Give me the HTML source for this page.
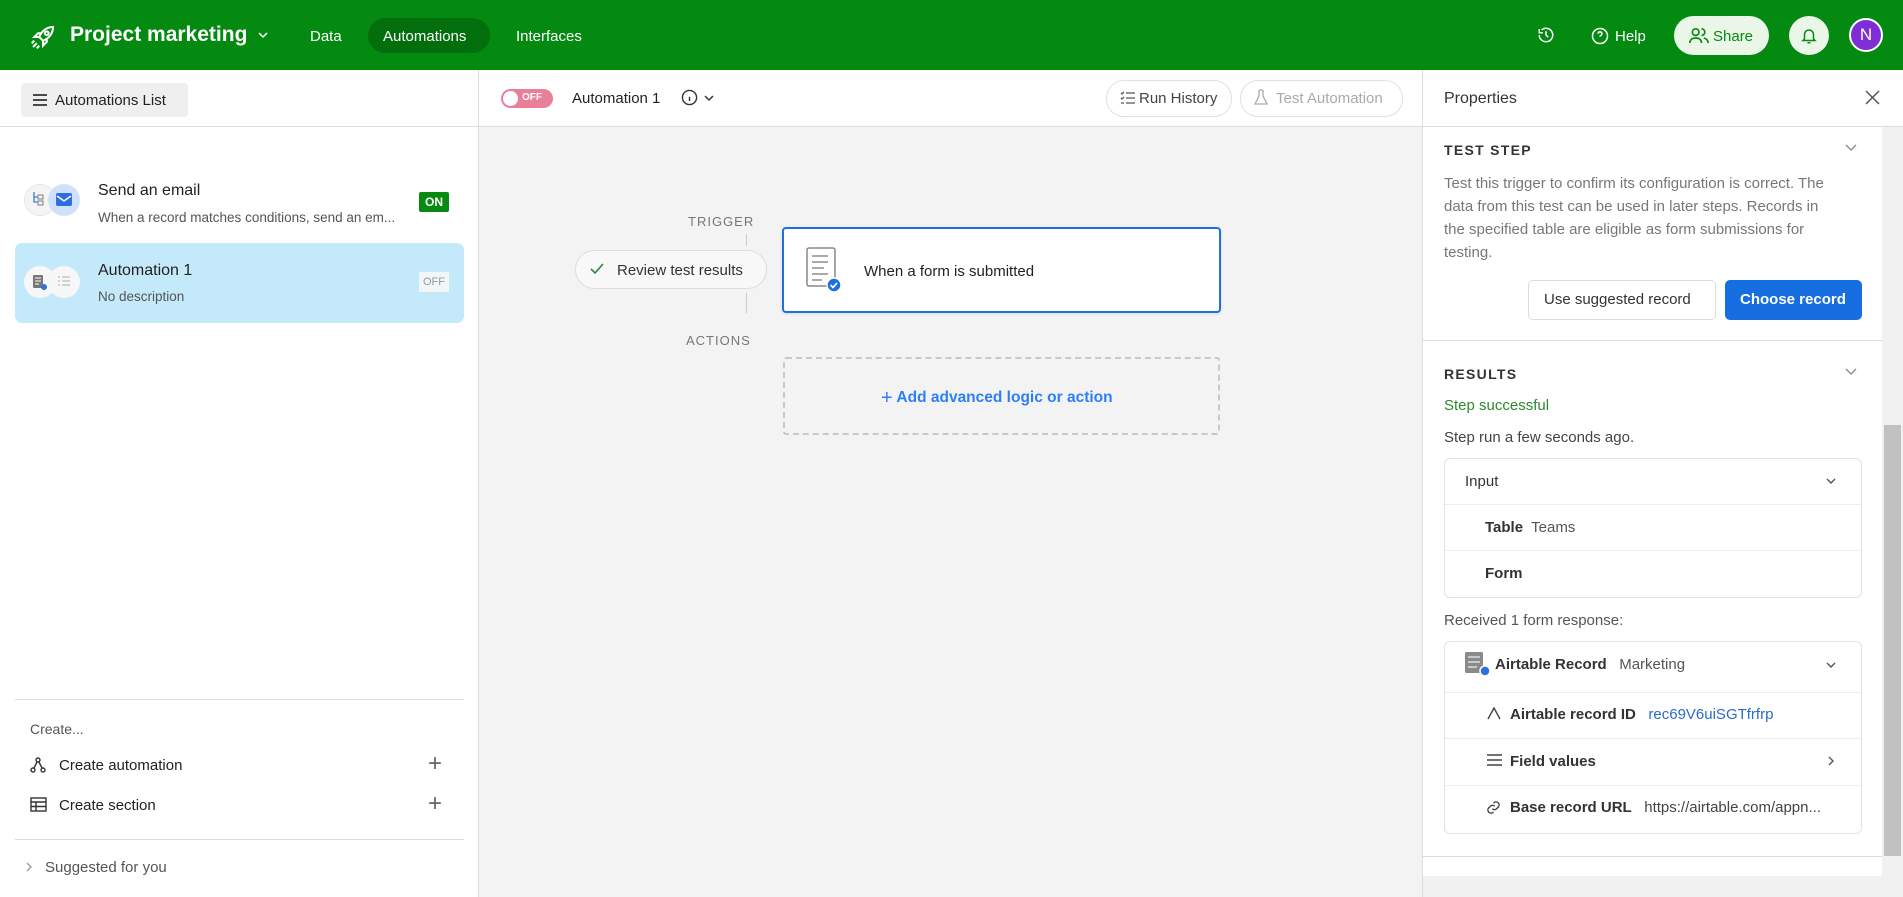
<!DOCTYPE html>
<html><head><meta charset="utf-8">
<style>
*{box-sizing:border-box;margin:0;padding:0}
body{width:1903px;height:897px;overflow:hidden;font-family:"Liberation Sans",sans-serif;color:#333;background:#fff;position:relative;font-size:15px}
.a{position:absolute;white-space:nowrap}
.hdr{position:absolute;left:0;top:0;width:1903px;height:70px;background:#048a10}
.w{color:#fff}
.b{font-weight:bold}
.sm{font-size:14px;color:#555}
.lbl{font-size:13px;letter-spacing:1px;color:#777}
.box{position:absolute;border:1px solid #e2e2e2;border-radius:6px;background:#fff}
.hl{position:absolute;height:1px;background:#ececec}
</style></head><body>
<div class="hdr"></div>
<svg class="a" style="left:28px;top:22px" width="30" height="30" viewBox="0 0 24 24" fill="none" stroke="#fff" stroke-width="1.6"><path d="M20 4c-5 0-9 3-11 8l3 3c5-2 8-6 8-11z"/><circle cx="15" cy="9" r="1.5"/><path d="M9 12H5l3-3h3M12 15v4l3-3v-3M7 17l-3 3M5 15l-2 2M9 19l-2 2"/></svg>
<div class="a w b" style="left:70px;top:23px;font-size:21px">Project marketing</div>
<svg class="a" style="left:257px;top:30px" width="12" height="10" viewBox="0 0 12 10" fill="none" stroke="#fff" stroke-width="1.5"><path d="M2 3l4 4 4-4"/></svg>
<div class="a w" style="left:310px;top:28px">Data</div>
<div class="a" style="left:368px;top:18px;width:122px;height:35px;border-radius:18px;background:#036f0c"></div>
<div class="a w" style="left:383px;top:28px">Automations</div>
<div class="a w" style="left:516px;top:28px">Interfaces</div>
<svg class="a" style="left:1537px;top:26px" width="18" height="18" viewBox="0 0 24 24" fill="none" stroke="#fff" stroke-width="2"><path d="M3 12a9 9 0 1 0 3-6.7M3 4v5h5M12 7v5l3 3"/></svg>
<svg class="a" style="left:1591px;top:27px" width="18" height="18" viewBox="0 0 24 24" fill="none" stroke="#fff" stroke-width="2"><circle cx="12" cy="12" r="10"/><path d="M9.5 9a2.5 2.5 0 1 1 3.5 2.3c-.6.3-1 .9-1 1.7M12 17h.01"/></svg>
<div class="a w" style="left:1615px;top:28px">Help</div>
<div class="a" style="left:1674px;top:16px;width:95px;height:39px;border-radius:20px;background:#eaf6e8"></div>
<svg class="a" style="left:1689px;top:27px" width="20" height="17" viewBox="0 0 24 20" fill="none" stroke="#048a10" stroke-width="2"><circle cx="8" cy="6" r="4"/><path d="M1 19c0-4 3-6 7-6s7 2 7 6M15 2a4 4 0 0 1 0 8M18 13c3 1 5 3 5 6"/></svg>
<div class="a" style="left:1713px;top:28px;color:#048a10">Share</div>
<div class="a" style="left:1789px;top:16px;width:40px;height:39px;border-radius:50%;background:#eaf6e8"></div>
<svg class="a" style="left:1800px;top:26px" width="18" height="20" viewBox="0 0 24 24" fill="none" stroke="#048a10" stroke-width="2"><path d="M6 16V10a6 6 0 0 1 12 0v6l2 2H4zM10 21h4"/></svg>
<div class="a" style="left:1849px;top:18px;width:34px;height:34px;border-radius:50%;background:#7d2ed6;border:2px solid #fff;color:#fff;font-size:17px;text-align:center;line-height:30px">N</div>

<!-- left panel -->
<div class="a" style="left:478px;top:70px;width:1px;height:827px;background:#ddd"></div>
<div class="hl" style="left:0;top:126px;width:478px;background:#ddd"></div>
<div class="a" style="left:21px;top:83px;width:167px;height:34px;background:#efefef;border-radius:4px"></div>
<svg class="a" style="left:32px;top:93px" width="16" height="14" viewBox="0 0 16 14" stroke="#333" stroke-width="1.8"><path d="M1 2h14M1 7h14M1 12h14"/></svg>
<div class="a" style="left:55px;top:92px;font-size:15px;color:#222">Automations List</div>

<div class="a" style="left:24px;top:184px;width:32px;height:32px;border-radius:50%;background:#f4f4f4;border:1px solid #e6e6e6"></div>
<div class="a" style="left:48px;top:184px;width:32px;height:32px;border-radius:50%;background:#cfe0fb"></div>
<svg class="a" style="left:56px;top:193px" width="16" height="13" viewBox="0 0 16 13"><rect width="16" height="13" rx="2" fill="#2d6ee0"/><path d="M1 3l7 5 7-5" stroke="#fff" stroke-width="1.5" fill="none"/></svg>
<svg class="a" style="left:32px;top:192px" width="12" height="16" viewBox="0 0 12 16" fill="none" stroke="#3a7be0" stroke-width="1.3"><path d="M2 0v10h4M2 5h4"/><rect x="6" y="3" width="5" height="4" stroke="#999"/><rect x="6" y="9" width="5" height="4" stroke="#999"/></svg>
<div class="a" style="left:98px;top:182px;font-size:16px;color:#222">Send an email</div>
<div class="a sm" style="left:98px;top:210px;font-size:13.5px">When a record matches conditions, send an em...</div>
<div class="a b" style="left:419px;top:192px;width:30px;height:20px;background:#078a12;color:#fff;font-size:12px;text-align:center;line-height:20px;border-radius:2px">ON</div>

<div class="a" style="left:15px;top:243px;width:449px;height:80px;background:#c4e9fb;border-radius:7px"></div>
<div class="a" style="left:24px;top:266px;width:32px;height:32px;border-radius:50%;background:#f7f7f7"></div>
<div class="a" style="left:48px;top:266px;width:32px;height:32px;border-radius:50%;background:#f7f7f7"></div>
<svg class="a" style="left:32px;top:274px" width="16" height="16" viewBox="0 0 16 16"><rect x="1" y="1" width="10" height="13" rx="1" fill="#777"/><path d="M3 4h6M3 7h6M3 10h4" stroke="#fff"/><circle cx="12" cy="13" r="3" fill="#2d6ee0"/></svg>
<svg class="a" style="left:58px;top:275px" width="12" height="12" viewBox="0 0 12 12" stroke="#bbb" stroke-width="1.2"><path d="M4 2h8M4 6h8M4 10h8M0 2h2M0 6h2M0 10h2"/></svg>
<div class="a" style="left:98px;top:262px;font-size:16px;color:#222">Automation 1</div>
<div class="a sm" style="left:98px;top:289px;font-size:13.5px">No description</div>
<div class="a" style="left:419px;top:272px;width:30px;height:20px;background:#f1f6f8;color:#999;font-size:11px;text-align:center;line-height:20px">OFF</div>

<div class="hl" style="left:15px;top:699px;width:449px;background:#ddd"></div>
<div class="a sm" style="left:30px;top:721px">Create...</div>
<svg class="a" style="left:30px;top:757px" width="16" height="16" viewBox="0 0 16 16" fill="none" stroke="#333" stroke-width="1.4"><circle cx="8" cy="3" r="2"/><circle cx="3" cy="13" r="2"/><circle cx="13" cy="13" r="2"/><path d="M7 5l-3 6M9 5l3 6"/></svg>
<div class="a" style="left:59px;top:757px;color:#222">Create automation</div>
<div class="a" style="left:428px;top:750px;font-size:24px;color:#666;font-weight:300">+</div>
<svg class="a" style="left:30px;top:797px" width="17" height="15" viewBox="0 0 17 15" fill="none" stroke="#333" stroke-width="1.4"><rect x="1" y="1" width="15" height="13"/><path d="M1 5h15M1 9.5h15M6 5v9"/></svg>
<div class="a" style="left:59px;top:797px;color:#222">Create section</div>
<div class="a" style="left:428px;top:790px;font-size:24px;color:#666">+</div>
<div class="hl" style="left:15px;top:839px;width:449px;background:#ddd"></div>
<svg class="a" style="left:25px;top:861px" width="8" height="12" viewBox="0 0 8 12" fill="none" stroke="#999" stroke-width="1.3"><path d="M2 2l4 4-4 4"/></svg>
<div class="a sm" style="left:45px;top:859px;font-size:15px">Suggested for you</div>

<!-- center -->
<div class="a" style="left:479px;top:126px;width:944px;height:771px;background:#f3f3f3"></div>
<div class="hl" style="left:479px;top:126px;width:944px;background:#ddd"></div>
<div class="a" style="left:501px;top:89px;width:52px;height:19px;border-radius:10px;background:#e9809a"></div>
<div class="a" style="left:503px;top:91px;width:15px;height:15px;border-radius:50%;background:#fff"></div>
<div class="a b" style="left:522px;top:92px;font-size:10px;color:#fff">OFF</div>
<div class="a" style="left:572px;top:90px;color:#222">Automation 1</div>
<svg class="a" style="left:681px;top:89px" width="17" height="17" viewBox="0 0 24 24" fill="none" stroke="#333" stroke-width="2"><circle cx="12" cy="12" r="10"/><path d="M12 11v6M12 7h.01"/></svg>
<svg class="a" style="left:703px;top:93px" width="12" height="10" viewBox="0 0 12 10" fill="none" stroke="#333" stroke-width="1.5"><path d="M2 3l4 4 4-4"/></svg>
<div class="a" style="left:1106px;top:80px;width:126px;height:37px;border:1px solid #e0e0e0;border-radius:18px"></div>
<svg class="a" style="left:1120px;top:91px" width="15" height="14" viewBox="0 0 15 14" fill="none" stroke="#555" stroke-width="1.3"><path d="M6 2h9M6 7h9M6 12h9M1 2l1 1 2-2M1 7l1 1 2-2M1 12h3"/></svg>
<div class="a" style="left:1139px;top:90px;color:#444">Run History</div>
<div class="a" style="left:1240px;top:80px;width:163px;height:37px;border:1px solid #e0e0e0;border-radius:18px"></div>
<svg class="a" style="left:1254px;top:89px" width="14" height="17" viewBox="0 0 14 17" fill="none" stroke="#aaa" stroke-width="1.3"><path d="M5 1h4M5 1v6L1 15h12L9 7V1"/></svg>
<div class="a" style="left:1276px;top:90px;color:#aaa">Test Automation</div>

<div class="a lbl" style="left:688px;top:214px">TRIGGER</div>
<div class="a" style="left:746px;top:234px;width:1px;height:12px;background:#ccc"></div>
<div class="a" style="left:746px;top:293px;width:1px;height:20px;background:#ccc"></div>
<div class="a" style="left:575px;top:250px;width:192px;height:39px;border:1px solid #ddd;border-radius:20px;background:#f8f8f8"></div>
<svg class="a" style="left:590px;top:263px" width="14" height="12" viewBox="0 0 14 12" fill="none" stroke="#278a3b" stroke-width="1.6"><path d="M1 6l4 4 8-9"/></svg>
<div class="a" style="left:617px;top:262px;color:#333">Review test results</div>
<div class="a" style="left:782px;top:227px;width:439px;height:86px;border:2px solid #1f6fe0;border-radius:4px;background:#fff;box-shadow:0 1px 3px rgba(0,0,0,.1)"></div>
<svg class="a" style="left:806px;top:247px" width="36" height="46" viewBox="0 0 36 46"><rect x="1" y="1" width="28" height="38" rx="2" fill="#fff" stroke="#888" stroke-width="1.5"/><path d="M6 9h16M6 15h16M6 21h12M6 27h16M6 33h10" stroke="#aaa" stroke-width="2"/><circle cx="28" cy="38" r="7" fill="#1f6fe0" stroke="#fff" stroke-width="1.5"/><path d="M24.5 38l2.5 2.5 4-4.5" stroke="#fff" stroke-width="1.7" fill="none"/></svg>
<div class="a" style="left:864px;top:263px;color:#222">When a form is submitted</div>
<div class="a lbl" style="left:686px;top:333px">ACTIONS</div>
<div class="a" style="left:783px;top:357px;width:437px;height:78px;border:2px dashed #c8c8c8;border-radius:3px"></div>
<div class="a b" style="left:881px;top:387px;color:#2d7ff9;font-size:15.5px"><span style="font-size:20px;font-weight:normal;vertical-align:-2px">+</span> Add advanced logic or action</div>

<!-- right panel -->
<div class="a" style="left:1422px;top:70px;width:1px;height:827px;background:#ddd"></div>
<div class="hl" style="left:1423px;top:126px;width:480px;background:#ddd"></div>
<div class="a" style="left:1444px;top:90px;font-size:16px;color:#333">Properties</div>
<svg class="a" style="left:1865px;top:90px" width="15" height="15" viewBox="0 0 15 15" stroke="#555" stroke-width="1.5"><path d="M1 1l13 13M14 1L1 14"/></svg>
<div class="a" style="left:1882px;top:127px;width:21px;height:749px;background:#f1f1f1"></div>
<div class="a" style="left:1884px;top:425px;width:17px;height:431px;background:#c1c1c1"></div>
<div class="a" style="left:1423px;top:876px;width:480px;height:21px;background:#f1f1f1"></div>
<div class="hl" style="left:1423px;top:856px;width:459px;background:#ddd"></div>

<div class="a lbl b" style="left:1444px;top:142px;font-size:14px;color:#333;letter-spacing:1.3px">TEST STEP</div>
<svg class="a" style="left:1844px;top:143px" width="14" height="10" viewBox="0 0 14 10" fill="none" stroke="#888" stroke-width="1.3"><path d="M2 2l5 5 5-5"/></svg>
<div class="a" style="left:1444px;top:172px;font-size:15px;line-height:23px;color:#777">Test this trigger to confirm its configuration is correct. The<br>data from this test can be used in later steps. Records in<br>the specified table are eligible as form submissions for<br>testing.</div>
<div class="a" style="left:1528px;top:280px;width:188px;height:40px;border:1px solid #ddd;border-radius:5px"></div>
<div class="a" style="left:1544px;top:291px;color:#333">Use suggested record</div>
<div class="a" style="left:1725px;top:280px;width:137px;height:40px;background:#166ee1;border-radius:5px"></div>
<div class="a b" style="left:1740px;top:291px;color:#fff">Choose record</div>
<div class="hl" style="left:1423px;top:340px;width:459px;background:#ddd"></div>

<div class="a lbl b" style="left:1444px;top:366px;font-size:14px;color:#333;letter-spacing:1.3px">RESULTS</div>
<svg class="a" style="left:1844px;top:367px" width="14" height="10" viewBox="0 0 14 10" fill="none" stroke="#888" stroke-width="1.3"><path d="M2 2l5 5 5-5"/></svg>
<div class="a" style="left:1444px;top:397px;color:#2c8a2e;font-size:15px">Step successful</div>
<div class="a" style="left:1444px;top:429px;color:#444;font-size:15px">Step run a few seconds ago.</div>

<div class="box" style="left:1444px;top:458px;width:418px;height:140px"></div>
<div class="hl" style="left:1445px;top:504px;width:416px"></div>
<div class="hl" style="left:1445px;top:550px;width:416px"></div>
<div class="a" style="left:1465px;top:473px;color:#333">Input</div>
<svg class="a" style="left:1825px;top:477px" width="12" height="9" viewBox="0 0 12 9" fill="none" stroke="#555" stroke-width="1.4"><path d="M2 2l4 4 4-4"/></svg>
<div class="a" style="left:1485px;top:519px"><b style="color:#333">Table</b>&nbsp; <span style="color:#555">Teams</span></div>
<div class="a b" style="left:1485px;top:565px;color:#333">Form</div>

<div class="a" style="left:1444px;top:612px;color:#555">Received 1 form response:</div>
<div class="box" style="left:1444px;top:641px;width:418px;height:193px"></div>
<div class="hl" style="left:1445px;top:692px;width:416px"></div>
<div class="hl" style="left:1445px;top:738px;width:416px"></div>
<div class="hl" style="left:1445px;top:785px;width:416px"></div>
<svg class="a" style="left:1465px;top:651px" width="26" height="26" viewBox="0 0 26 26"><rect x="0" y="1" width="18" height="21" rx="1.5" fill="#8a8a8a"/><path d="M3 6h12M3 11h12M3 16h9" stroke="#ddd" stroke-width="1.6"/><circle cx="20" cy="20" r="5" fill="#2d6ee0" stroke="#fff" stroke-width="1.5"/></svg>
<div class="a" style="left:1495px;top:656px"><b style="color:#333">Airtable Record</b>&nbsp;&nbsp; <span style="color:#555">Marketing</span></div>
<svg class="a" style="left:1825px;top:661px" width="12" height="9" viewBox="0 0 12 9" fill="none" stroke="#555" stroke-width="1.4"><path d="M2 2l4 4 4-4"/></svg>
<svg class="a" style="left:1487px;top:707px" width="14" height="13" viewBox="0 0 14 13" fill="none" stroke="#444" stroke-width="1.4"><path d="M1 12L7 1l6 11"/></svg>
<div class="a" style="left:1510px;top:706px"><b style="color:#333">Airtable record ID</b>&nbsp;&nbsp; <span style="color:#2a6bc7">rec69V6uiSGTfrfrp</span></div>
<svg class="a" style="left:1487px;top:754px" width="15" height="12" viewBox="0 0 15 12" stroke="#444" stroke-width="1.4"><path d="M0 1h15M0 6h15M0 11h15"/></svg>
<div class="a b" style="left:1510px;top:753px;color:#333">Field values</div>
<svg class="a" style="left:1827px;top:755px" width="8" height="12" viewBox="0 0 8 12" fill="none" stroke="#555" stroke-width="1.4"><path d="M2 2l4 4-4 4"/></svg>
<svg class="a" style="left:1486px;top:800px" width="15" height="15" viewBox="0 0 24 24" fill="none" stroke="#444" stroke-width="2.2"><path d="M10 14a5 5 0 0 0 7 0l3-3a5 5 0 0 0-7-7l-1 1M14 10a5 5 0 0 0-7 0l-3 3a5 5 0 0 0 7 7l1-1"/></svg>
<div class="a" style="left:1510px;top:799px"><b style="color:#333">Base record URL</b>&nbsp;&nbsp; <span style="color:#444">https://airtable.com/appn...</span></div>
</body></html>
